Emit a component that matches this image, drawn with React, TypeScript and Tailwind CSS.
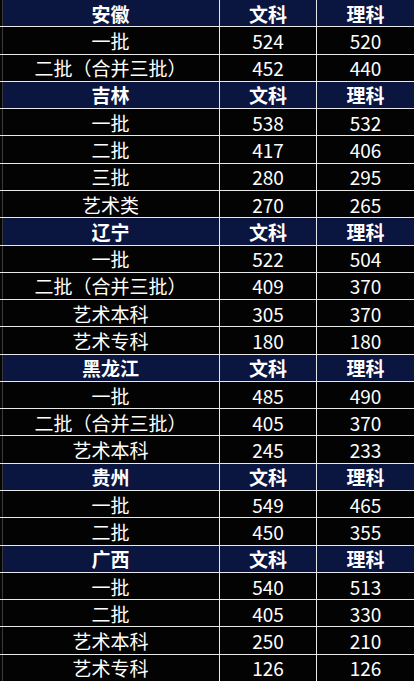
import React from "react";

type Row = { h: boolean; a: string; b: string; c: string };

const data: Row[] = [
  { h: true, a: "安徽", b: "文科", c: "理科" },
  { h: false, a: "一批", b: "524", c: "520" },
  { h: false, a: "二批（合并三批）", b: "452", c: "440" },
  { h: true, a: "吉林", b: "文科", c: "理科" },
  { h: false, a: "一批", b: "538", c: "532" },
  { h: false, a: "二批", b: "417", c: "406" },
  { h: false, a: "三批", b: "280", c: "295" },
  { h: false, a: "艺术类", b: "270", c: "265" },
  { h: true, a: "辽宁", b: "文科", c: "理科" },
  { h: false, a: "一批", b: "522", c: "504" },
  { h: false, a: "二批（合并三批）", b: "409", c: "370" },
  { h: false, a: "艺术本科", b: "305", c: "370" },
  { h: false, a: "艺术专科", b: "180", c: "180" },
  { h: true, a: "黑龙江", b: "文科", c: "理科" },
  { h: false, a: "一批", b: "485", c: "490" },
  { h: false, a: "二批（合并三批）", b: "405", c: "370" },
  { h: false, a: "艺术本科", b: "245", c: "233" },
  { h: true, a: "贵州", b: "文科", c: "理科" },
  { h: false, a: "一批", b: "549", c: "465" },
  { h: false, a: "二批", b: "450", c: "355" },
  { h: true, a: "广西", b: "文科", c: "理科" },
  { h: false, a: "一批", b: "540", c: "513" },
  { h: false, a: "二批", b: "405", c: "330" },
  { h: false, a: "艺术本科", b: "250", c: "210" },
  { h: false, a: "艺术专科", b: "126", c: "126" },
];

export default function App() {
  return (
    <div
      className="w-[414px] h-[681px] bg-[#e8e8e8] grid grid-cols-[219px_96px_1fr] grid-rows-[repeat(25,1fr)] gap-px overflow-hidden"
      style={{ fontFamily: '"Noto Sans CJK SC", "Noto Sans", sans-serif' }}
    >
      {data.map((r, i) => {
        const bg = r.h ? "bg-[#0a1540]" : "bg-[#030303]";
        const txt = r.h ? "font-bold text-[19px]" : "font-normal text-[19px]";
        return (
          <React.Fragment key={i}>
            <div className={`${bg} ${txt} text-white flex items-center justify-center leading-none border-l-2 border-l-[#050505] shadow-[inset_1px_0_0_#3a3a3a]`}>
              {r.a}
            </div>
            <div className={`${bg} ${txt} text-white flex items-center justify-center leading-none`}>
              {r.b}
            </div>
            <div className={`${bg} ${txt} text-white flex items-center justify-center leading-none`}>
              {r.c}
            </div>
          </React.Fragment>
        );
      })}
    </div>
  );
}
